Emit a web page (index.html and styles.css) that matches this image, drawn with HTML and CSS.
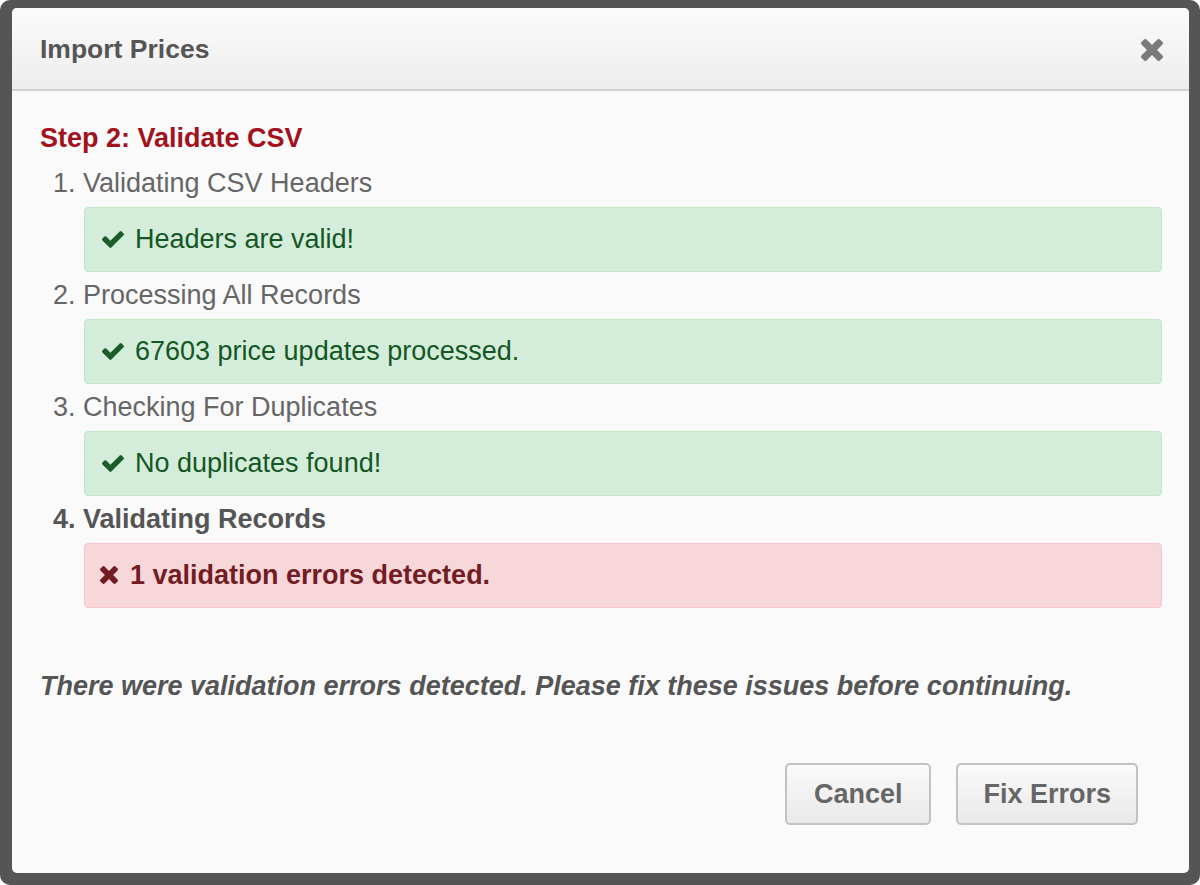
FILE: index.html
```html
<!DOCTYPE html>
<html lang="en">
<head>
    <meta charset="UTF-8">
    <meta name="viewport" content="width=device-width, initial-scale=1.0">
    <title>Import Prices</title>
    <link rel="stylesheet" href="styles.css">
</head>
<body>
    <div class="frame">
        <div class="dialog">
            <div class="dialog-header">
                <h2>Import Prices</h2>
                <span class="close">
                    <svg width="22" height="22" viewBox="110 366 1188 1188"><path d="M1298 1322q0 40-28 68l-136 136q-28 28-68 28t-68-28l-294-294-294 294q-28 28-68 28t-68-28l-136-136q-28-28-28-68t28-68l294-294-294-294q-28-28-28-68t28-68l136-136q28-28 68-28t68 28l294 294 294-294q28-28 68-28t68 28l136 136q28 28 28 68t-28 68l-294 294 294 294q28 28 28 68z"/></svg>
                </span>
            </div>

            <div class="dialog-body">
                <h3 class="step">Step 2: Validate CSV</h3>

                <div class="task">1. Validating CSV Headers</div>
                <div class="alert alert-success">
                    <svg class="icon-check" width="22" height="17" viewBox="121 334 1550 1188"><path d="M1671 566q0 40-28 68l-724 724-136 136q-28 28-68 28t-68-28l-136-136-362-362q-28-28-28-68t28-68l136-136q28-28 68-28t68 28l294 295 656-657q28-28 68-28t68 28l136 136q28 28 28 68z"/></svg>
                    Headers are valid!
                </div>

                <div class="task">2. Processing All Records</div>
                <div class="alert alert-success">
                    <svg class="icon-check" width="22" height="17" viewBox="121 334 1550 1188"><path d="M1671 566q0 40-28 68l-724 724-136 136q-28 28-68 28t-68-28l-136-136-362-362q-28-28-28-68t28-68l136-136q28-28 68-28t68 28l294 295 656-657q28-28 68-28t68 28l136 136q28 28 28 68z"/></svg>
                    67603 price updates processed.
                </div>

                <div class="task">3. Checking For Duplicates</div>
                <div class="alert alert-success">
                    <svg class="icon-check" width="22" height="17" viewBox="121 334 1550 1188"><path d="M1671 566q0 40-28 68l-724 724-136 136q-28 28-68 28t-68-28l-136-136-362-362q-28-28-28-68t28-68l136-136q28-28 68-28t68 28l294 295 656-657q28-28 68-28t68 28l136 136q28 28 28 68z"/></svg>
                    No duplicates found!
                </div>

                <div class="task task-current">4. Validating Records</div>
                <div class="alert alert-danger">
                    <svg class="icon-times" width="18" height="18" viewBox="110 366 1188 1188"><path d="M1298 1322q0 40-28 68l-136 136q-28 28-68 28t-68-28l-294-294-294 294q-28 28-68 28t-68-28l-136-136q-28-28-28-68t28-68l294-294-294-294q-28-28-28-68t28-68l136-136q28-28 68-28t68 28l294 294 294-294q28-28 68-28t68 28l136 136q28 28 28 68t-28 68l-294 294 294 294q28 28 28 68z"/></svg>
                    1 validation errors detected.
                </div>

                <p class="note">There were validation errors detected. Please fix these issues before continuing.</p>
            </div>

            <div class="dialog-footer">
                <button class="btn">Cancel</button>
                <button class="btn btn-fix">Fix Errors</button>
            </div>
        </div>
    </div>
</body>
</html>
```

FILE: styles.css
```css
html, body {
    margin: 0;
    padding: 0;
    background: #ffffff;
    font-family: "Liberation Sans", Arial, sans-serif;
}

.frame {
    box-sizing: border-box;
    height: 885px;
    padding: 8px 11px 12px 12px;
    background: #555555;
    border-radius: 10px;
}

.dialog {
    box-sizing: border-box;
    height: 100%;
    background: #fafafa;
    border-radius: 5px;
    overflow: hidden;
    display: flex;
    flex-direction: column;
}

.dialog-header {
    height: 81px;
    display: flex;
    align-items: center;
    justify-content: space-between;
    padding: 0 26px 0 28px;
    background: linear-gradient(#fbfbfb, #ededed);
    border-bottom: 2px solid #d2d2d2;
}

.dialog-header h2 {
    margin: 0;
    font-size: 26.5px;
    line-height: 36px;
    font-weight: bold;
    color: #555555;
}

.close {
    display: flex;
    fill: #7a7a7a;
    margin-top: 2px;
}

.dialog-body {
    padding: 29px 27px 0 28px;
}

.step {
    margin: 0 0 9px;
    font-size: 27px;
    line-height: 36px;
    font-weight: bold;
    color: #a3111d;
}

.task {
    margin: 0 0 6px 13px;
    font-size: 27px;
    line-height: 36px;
    color: #666666;
}

.task-current {
    font-weight: bold;
    color: #555555;
}

.alert {
    display: flex;
    align-items: center;
    margin: 0 0 5px 44px;
    padding: 16px 17px 17px;
    font-size: 27px;
    line-height: 30px;
    border: 1px solid;
    border-radius: 4px;
}

.alert svg {
    margin-right: 11px;
    flex-shrink: 0;
}

.alert-success {
    background: #d4edda;
    border-color: #c3e6cb;
    color: #155724;
    fill: #1a5c2a;
}

.alert-danger {
    background: #f8d7da;
    border-color: #f5c6cb;
    color: #721c24;
    fill: #721c24;
    font-weight: bold;
    padding-left: 15px;
}

.alert-danger svg {
    margin-right: 12px;
}

.note {
    margin: 60px 0 0;
    font-size: 27px;
    line-height: 36px;
    font-weight: bold;
    font-style: italic;
    color: #555555;
}

.dialog-footer {
    display: flex;
    justify-content: flex-end;
    gap: 25px;
    padding: 59px 51px 0 0;
}

.btn {
    height: 62px;
    padding: 0 27px;
    font-family: inherit;
    font-size: 27px;
    font-weight: bold;
    color: #666666;
    background: linear-gradient(#fafafa, #e9e9e9);
    border: 2px solid #c2c2c2;
    border-radius: 5px;
    cursor: pointer;
}

.btn-fix {
    padding: 0 25px;
}
```
